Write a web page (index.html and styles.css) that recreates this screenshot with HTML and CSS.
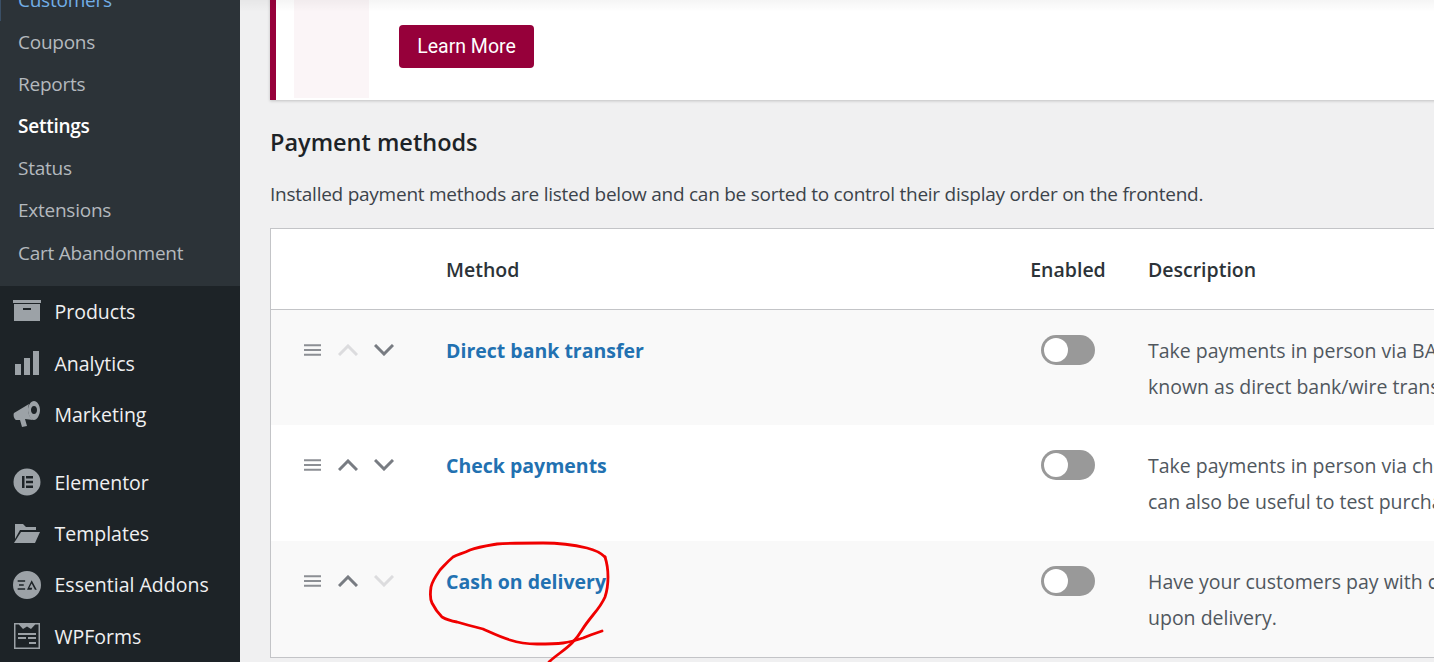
FILE: index.html
```html
<!DOCTYPE html>
<html lang="en">
<head>
  <meta charset="UTF-8">
  <meta name="viewport" content="width=device-width, initial-scale=1.0">
  <title>Payment methods</title>
  <link rel="stylesheet" href="styles.css">
</head>
<body>
  <div class="layout">
    <!-- Sidebar -->
    <aside class="sidebar">
      <ul class="submenu">
        <li class="current-hover"><a href="#">Customers</a></li>
        <li><a href="#">Coupons</a></li>
        <li><a href="#">Reports</a></li>
        <li class="active"><a href="#">Settings</a></li>
        <li><a href="#">Status</a></li>
        <li><a href="#">Extensions</a></li>
        <li><a href="#">Cart Abandonment</a></li>
      </ul>
      <ul class="menu">
        <li>
          <svg class="menu-icon" viewBox="0 0 28 28"><path d="M0 2h28v3H0zM1 6h26v17H1zM10 10v2h8v-2z" fill-rule="evenodd"/></svg>
          <a href="#">Products</a>
        </li>
        <li>
          <svg class="menu-icon" viewBox="0 0 28 28"><path d="M2 15h6v11H2zM11 9h6v17h-6zM20 2h6v24h-6z"/></svg>
          <a href="#">Analytics</a>
        </li>
        <li>
          <svg class="menu-icon" viewBox="0 0 28 28"><path d="M1 13l15-9c-2 5-1 12 4 16L12 19l2 7-5 1-2-7-4 0c-2-1-3-5-2-7z"/><path fill-rule="evenodd" d="M21 1c3 0 6 4 6 9s-3 10-6 10-6-5-6-10 3-9 6-9zm0 5c-2 0-3 2-3 4s1 4 3 4 3-2 3-4-1-4-3-4z"/></svg>
          <a href="#">Marketing</a>
        </li>
        <li class="menu-gap">
          <svg class="menu-icon" viewBox="0 0 28 28"><path fill-rule="evenodd" d="M14 .5a13.500 13.500 0 1 0 0 27 13.500 13.500 0 0 0 0-27zM9 8h2.500v12H9zM13 8h7v2.400h-7zM13 12.800h7v2.400h-7zM13 17.600h7V20h-7z"/></svg>
          <a href="#">Elementor</a>
        </li>
        <li>
          <svg class="menu-icon" viewBox="0 0 28 28"><path d="M2 4h8l3 3h10v3H7l-5 9z"/><path d="M8 12h19l-5 11H1z"/></svg>
          <a href="#">Templates</a>
        </li>
        <li>
          <svg class="menu-icon" viewBox="0 0 30 30"><path fill-rule="evenodd" d="M15 0a15 15 0 1 0 0 30 15 15 0 0 0 0-30zM5 10h8v1.600H5zM6.500 14.200h5v1.600h-5zM5 18.500h8v1.600H5zM20 10l5.500 10h-2L20 13.500 17.500 18h3l-.5 2h-5z"/></svg>
          <a href="#">Essential Addons</a>
        </li>
        <li>
          <svg class="menu-icon" viewBox="0 0 28 28"><path fill-rule="evenodd" d="M1 1h26v26H1zM2.500 2.500v23h23v-23h-3.300L18 7l-4-2.600L10 7 5.800 2.500zM5 11h18v2H5zM5 15h8v2H5zM15 15h8v2h-8zM16 20h7v2h-7z"/></svg>
          <a href="#">WPForms</a>
        </li>
      </ul>
    </aside>

    <!-- Main content -->
    <main class="content">
      <div class="notice">
        <div class="notice-image"></div>
        <a class="notice-btn" href="#">Learn More</a>
      </div>

      <h2>Payment methods</h2>
      <p class="intro">Installed payment methods are listed below and can be sorted to control their display order on the frontend.</p>

      <table class="methods">
        <colgroup>
          <col class="col-sort">
          <col class="col-name">
          <col class="col-status">
          <col class="col-desc">
        </colgroup>
        <thead>
          <tr>
            <th></th>
            <th>Method</th>
            <th class="center">Enabled</th>
            <th>Description</th>
          </tr>
        </thead>
        <tbody>
          <tr class="alt first">
            <td>
              <div class="sort">
                <svg class="handle" viewBox="0 0 18 12"><path d="M0 0h18v2H0zM0 5h18v2H0zM0 10h18v2H0z"/></svg>
                <svg class="chevron off" viewBox="0 0 20 12"><path d="M1 11l9-9 9 9"/></svg>
                <svg class="chevron" viewBox="0 0 20 12"><path d="M1 1l9 9 9-9"/></svg>
              </div>
            </td>
            <td><a class="method-link" href="#">Direct bank transfer</a></td>
            <td class="center"><span class="toggle"></span></td>
            <td>Take payments in person via BACS. More commonly<br>known as direct bank/wire transfer.</td>
          </tr>
          <tr>
            <td>
              <div class="sort">
                <svg class="handle" viewBox="0 0 18 12"><path d="M0 0h18v2H0zM0 5h18v2H0zM0 10h18v2H0z"/></svg>
                <svg class="chevron" viewBox="0 0 20 12"><path d="M1 11l9-9 9 9"/></svg>
                <svg class="chevron" viewBox="0 0 20 12"><path d="M1 1l9 9 9-9"/></svg>
              </div>
            </td>
            <td><a class="method-link" href="#">Check payments</a></td>
            <td class="center"><span class="toggle"></span></td>
            <td>Take payments in person via checks. This offline gateway<br>can also be useful to test purchases.</td>
          </tr>
          <tr class="alt">
            <td>
              <div class="sort">
                <svg class="handle" viewBox="0 0 18 12"><path d="M0 0h18v2H0zM0 5h18v2H0zM0 10h18v2H0z"/></svg>
                <svg class="chevron" viewBox="0 0 20 12"><path d="M1 11l9-9 9 9"/></svg>
                <svg class="chevron off" viewBox="0 0 20 12"><path d="M1 1l9 9 9-9"/></svg>
              </div>
            </td>
            <td><a class="method-link" href="#">Cash on delivery</a></td>
            <td class="center"><span class="toggle"></span></td>
            <td>Have your customers pay with cash (or by other means)<br>upon delivery.</td>
          </tr>
        </tbody>
      </table>
    </main>
  </div>

  <!-- Hand drawn annotation on top of the screenshot -->
  <svg class="scribble" viewBox="0 0 1434 662">
    <path d="M605 557C600 552 595 550 587 548C570 544 555 543 543 543C525 543 510 543 497 544C485 546 478 547 470 550C462 554 458 554 453 557C447 562 444 566 440 570C435 577 432 582 431 587C430 594 430 599 432 603C435 609 438 613 442 617C447 620 451 621 457 622C467 625 475 627 483 629C492 633 500 637 510 640C519 643 528 644 537 644C546 644 555 644 563 643C571 642 577 640 583 638C590 635 596 633 602 631"/>
    <path d="M605 557C607 563 608 570 608 577C608 584 607 591 605 597C602 604 598 609 593 615C589 620 585 625 582 630C579 635 576 639 572 643C568 647 564 650 560 653C556 656 552 659 549 662"/>
  </svg>
</body>
</html>
```

FILE: styles.css
```css
/* General */
html, body {
  margin: 0;
  padding: 0;
  height: 662px;
  overflow: hidden;
}

body {
  font-family: 'Open Sans', 'Noto Sans', sans-serif;
  font-size: 19.5px;
  background: #f0f0f1;
  color: #3c434a;
}

a {
  text-decoration: none;
}

ul {
  list-style: none;
  margin: 0;
  padding: 0;
}

.layout {
  display: flex;
  height: 662px;
}

/* Sidebar */
.sidebar {
  flex: 0 0 240px;
  background: #1d2327;
  overflow: hidden;
}

.submenu {
  margin-top: -21.5px;
  padding-bottom: 12.5px;
  background: #2c3338;
  font-size: 19px;
  letter-spacing: -0.25px;
}

.submenu li {
  height: 42.2px;
  line-height: 42px;
  padding-left: 18px;
}

.submenu a {
  color: #b4b9be;
}

.submenu .current-hover {
  box-shadow: inset 1px 0 0 #3a4f66;
}

.submenu .current-hover a {
  color: #72aee6;
}

.submenu .active a {
  color: #fff;
  font-weight: 600;
}

.menu li {
  display: flex;
  align-items: center;
  height: 51.2px;
  padding-left: 13px;
}

.menu .menu-gap {
  margin-top: 17px;
}

.menu a {
  margin-left: 13.5px;
  color: #f0f0f1;
}

.menu-icon {
  width: 28px;
  height: 28px;
  flex: none;
  fill: #9ca2a7;
}

/* Main content */
.content {
  position: relative;
  flex: 1;
  min-width: 0;
  padding-left: 30px;
  overflow: hidden;
}

.content::before {
  content: "";
  position: absolute;
  top: 0;
  left: 0;
  right: 0;
  height: 12px;
  background: linear-gradient(rgba(0, 0, 0, 0.04), rgba(0, 0, 0, 0));
}

.notice {
  display: flex;
  align-items: flex-start;
  box-sizing: border-box;
  width: 1300px;
  height: 120px;
  margin-top: -20px;
  padding-left: 18px;
  background: #fff;
  border-left: 6px solid #96003a;
  box-shadow: 0 1px 3px rgba(0, 0, 0, 0.2);
}

.notice-image {
  width: 75px;
  height: 118px;
  background: #fbf5f7;
}

.notice-btn {
  margin: 45px 0 0 30px;
  width: 135px;
  height: 43px;
  line-height: 44px;
  text-align: center;
  border-radius: 4px;
  background: #96003a;
  color: #fff;
  font-family: 'Roboto', sans-serif;
  font-size: 19.5px;
}

h2 {
  margin: 26px 0 0;
  font-size: 23.5px;
  line-height: 32px;
  font-weight: 600;
  color: #1d2327;
}

.intro {
  margin: 20px 0 0;
  line-height: 32px;
  font-size: 19px;
  letter-spacing: -0.25px;
}

/* Methods table */
.methods {
  width: 1300px;
  margin-top: 18px;
  table-layout: fixed;
  border-collapse: separate;
  border-spacing: 0;
  background: #fff;
  border: 1px solid #c3c4c7;
}

.col-sort { width: 175px; }
.col-name { width: 569px; }
.col-status { width: 106px; }
.col-desc { width: 450px; }

.methods th {
  height: 80px;
  padding: 0;
  text-align: left;
  font-weight: 600;
  color: #2c3338;
  border-bottom: 1px solid #c3c4c7;
}

.methods td {
  height: 116px;
  box-sizing: border-box;
  padding: 23px 0 0;
  vertical-align: top;
  line-height: 36px;
  color: #50575e;
  white-space: nowrap;
}

.methods .first td {
  height: 115px;
}

.methods th:last-child,
.methods td:last-child {
  padding-left: 27px;
  padding-right: 0;
}

.methods .center {
  text-align: center;
}

.methods .alt td {
  background: #f9f9f9;
}

.sort {
  display: flex;
  align-items: center;
  height: 33px;
  padding-left: 33px;
}

.handle {
  width: 17px;
  height: 12px;
  fill: #8c8f94;
}

.chevron {
  width: 20px;
  height: 12px;
  margin-left: 16px;
  fill: none;
  stroke: #787c82;
  stroke-width: 3;
}

.handle + .chevron {
  margin-left: 17px;
}

.chevron.off {
  stroke: #dcdcde;
}

.method-link {
  color: #2271b1;
  font-weight: 700;
}

.toggle {
  position: relative;
  display: inline-block;
  vertical-align: top;
  margin-top: 2px;
  width: 54px;
  height: 30px;
  border-radius: 15px;
  background: #999;
}

.toggle::after {
  content: "";
  position: absolute;
  top: 3px;
  left: 3px;
  width: 24px;
  height: 24px;
  border-radius: 50%;
  background: #fff;
}

/* Red annotation */
.scribble {
  position: absolute;
  top: 0;
  left: 0;
  width: 1434px;
  height: 662px;
  pointer-events: none;
  fill: none;
  stroke: #f00000;
  stroke-width: 2.8;
  stroke-linecap: round;
}
```
